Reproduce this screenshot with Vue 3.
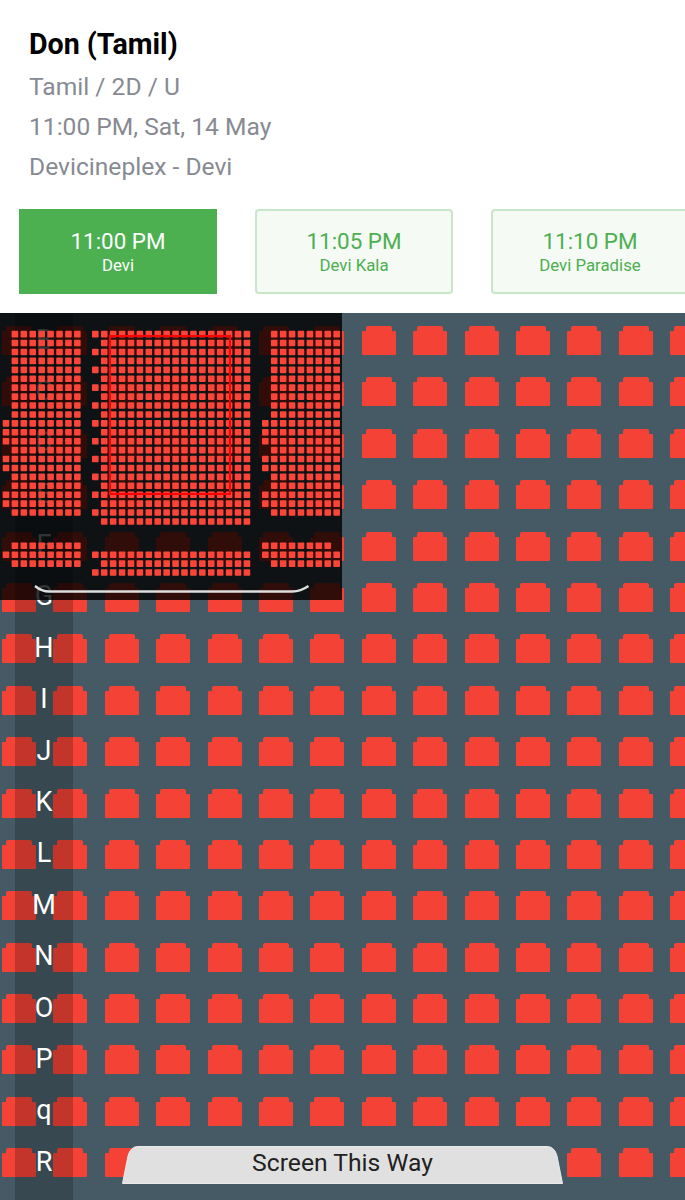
<script setup>
const showtimes = [
  { time: '11:00 PM', hall: 'Devi', active: true },
  { time: '11:05 PM', hall: 'Devi Kala', active: false },
  { time: '11:10 PM', hall: 'Devi Paradise', active: false },
]
const labels = ['B', 'C', 'D', 'E', 'F', 'G', 'H', 'I', 'J', 'K', 'L', 'M', 'N', 'O', 'P', 'q', 'R']
const seatRows = 18
const seatCols = 14

const PITCH = 8.92
const miniSeats = []
const place = (x0, y0, cols, rows, isOn) => {
  for (let r = 0; r < rows; r++) {
    for (let c = 0; c < cols; c++) {
      if (isOn(r, c)) {
        miniSeats.push({
          id: `${x0}-${y0}-${r}-${c}`,
          x: +(x0 + c * PITCH).toFixed(2),
          y: +(y0 + r * PITCH).toFixed(2),
        })
      }
    }
  }
}
const LEFT = 2.7
const MID = 92
const RIGHT = 262
const sideFirst = [10, 11, 12, 14, 15, 18, 19]
const side = (r, c) => c > 0 || sideFirst.includes(r)
place(LEFT, 17.85, 9, 21, side)
place(MID, 17.85, 18, 22, (r, c) => c > 0 || (r % 2 === 0 && r < 21))
place(RIGHT, 17.85, 9, 21, side)
place(LEFT, 229.5, 9, 3, (r, c) => r === 1 || c > 0)
place(MID, 229.5, 18, 4, (r, c) => r === 1 || r === 3 || (r === 2 && c > 0))
place(RIGHT, 229.5, 9, 3, (r, c) => (r === 0 && c < 8) || r === 1 || (r === 2 && c > 0))
</script>

<template>
  <div class="page">
    <header class="info">
      <h1 class="title">Don (Tamil)</h1>
      <p class="meta">Tamil / 2D / U</p>
      <p class="meta">11:00 PM, Sat, 14 May</p>
      <p class="meta">Devicineplex - Devi</p>
    </header>

    <div class="times">
      <div v-for="s in showtimes" :key="s.time" class="time" :class="{ active: s.active }">
        <span class="clock">{{ s.time }}</span>
        <span class="hall">{{ s.hall }}</span>
      </div>
    </div>

    <main class="map">
      <div class="seats">
        <div v-for="r in seatRows" :key="r" class="row">
          <span v-for="c in seatCols" :key="c" class="seat"></span>
        </div>
      </div>

      <div class="labels">
        <span v-for="(l, i) in labels" :key="i" class="label">{{ l }}</span>
      </div>

      <div class="mini">
        <svg class="mini-plan" width="342" height="287" viewBox="0 0 342 287" fill="none">
          <rect
            v-for="s in miniSeats"
            :key="s.id"
            :x="s.x"
            :y="s.y"
            width="6.6"
            height="6.6"
            rx="0.8"
            fill="#fb4538"
          />
          <rect x="110" y="23" width="120" height="158" stroke="#f00" stroke-width="2" />
          <path d="M35 273 Q41.5 278.5 49.5 278.5 H292.5 Q300.5 278.5 308.5 273" stroke="#dedede" stroke-width="2.4" />
        </svg>
      </div>

      <div class="screen">
        <svg class="screen-shape" width="441" height="38" viewBox="0 0 441 38">
          <path d="M0.5 37.5 L6 10 Q8.5 0.5 16 0.5 H425 Q432.5 0.5 435 10 L440.5 37.5 Z" fill="#e0e0e0" stroke="#ebebeb" stroke-width="1" />
        </svg>
        <span class="screen-text">Screen This Way</span>
      </div>
    </main>
  </div>
</template>

<style>
html, body { margin: 0; background: #fff; }
</style>

<style scoped>
.page {
  width: 685px;
  height: 1200px;
  overflow: hidden;
  display: flex;
  flex-direction: column;
  font-family: Roboto, "Liberation Sans", sans-serif;
}
.info { padding: 24px 0 0 29px; }
.title {
  margin: 0 0 3px;
  font-size: 28.6px;
  line-height: 40px;
  font-weight: 700;
  color: #000;
}
.meta {
  margin: 0;
  font-size: 24.6px;
  line-height: 40px;
  color: #878a92;
}
.times {
  display: flex;
  gap: 38px;
  padding-left: 19px;
  margin: 22px 0 19px;
  overflow: hidden;
}
.time {
  flex: 0 0 198px;
  height: 85px;
  box-sizing: border-box;
  display: flex;
  flex-direction: column;
  align-items: center;
  justify-content: center;
  border: 2px solid #c8e6c9;
  border-radius: 4px;
  background: #f5faf5;
  color: #4caf50;
}
.time.active {
  background: #4caf50;
  border-color: #4caf50;
  border-radius: 0;
  color: #fff;
}
.clock { font-size: 22.4px; line-height: 28px; margin-top: -1px; }
.hall { font-size: 16.8px; line-height: 20px; }

.map {
  position: relative;
  flex: 1;
  overflow: hidden;
  background: #455a64;
}
.seats {
  display: flex;
  flex-direction: column;
  gap: 22.4px;
  padding: 13px 0 0 2px;
}
.row { display: flex; gap: 17.4px; }
.seat {
  flex: 0 0 34px;
  height: 24px;
  margin-top: 5px;
  position: relative;
  background: #f44336;
  border-radius: 1px;
}
.seat::before {
  content: "";
  position: absolute;
  left: 4px;
  right: 4px;
  top: -5px;
  height: 5px;
  background: #f44336;
  border-radius: 2px 2px 0 0;
}

.labels {
  position: absolute;
  left: 15px;
  top: 0;
  bottom: 0;
  width: 58px;
  display: flex;
  flex-direction: column;
  gap: 22.4px;
  padding-top: 12.5px;
  box-sizing: border-box;
  background: rgba(0, 0, 0, 0.2);
}
.label {
  height: 29px;
  line-height: 29px;
  font-size: 27px;
  text-align: center;
  color: #fff;
}

.mini {
  position: absolute;
  left: 0;
  top: 0;
  width: 342px;
  height: 287px;
  background: rgba(0, 0, 0, 0.8);
}
.mini-plan { display: block; }

.screen {
  position: absolute;
  left: 122px;
  top: 833px;
  width: 441px;
  height: 38px;
  display: flex;
  align-items: center;
  justify-content: center;
}
.screen-shape { position: absolute; left: 0; top: 0; }
.screen-text {
  position: relative;
  top: -2px;
  font-size: 24.7px;
  line-height: 34px;
  color: #222;
}
</style>
